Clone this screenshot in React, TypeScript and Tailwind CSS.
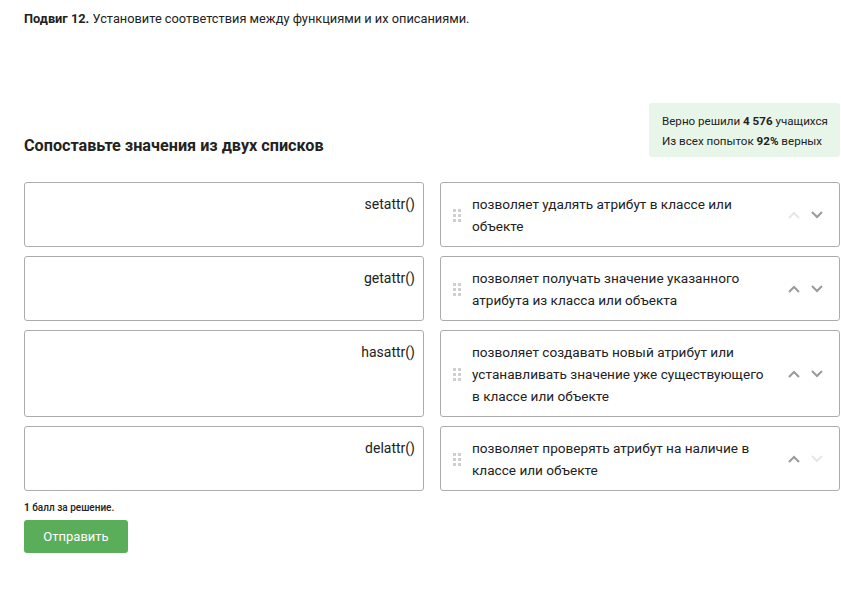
import React from "react";

const pairs = [
  { left: "setattr()", right: "позволяет удалять атрибут в классе или объекте", up: false, down: true },
  { left: "getattr()", right: "позволяет получать значение указанного атрибута из класса или объекта", up: true, down: true },
  { left: "hasattr()", right: "позволяет создавать новый атрибут или устанавливать значение уже существующего в классе или объекте", up: true, down: true },
  { left: "delattr()", right: "позволяет проверять атрибут на наличие в классе или объекте", up: true, down: false },
];

function Grip() {
  return (
    <div className="grid grid-cols-2 gap-[2px] shrink-0">
      {[0, 1, 2, 3, 4, 5].map((i) => (
        <span key={i} className="w-[3px] h-[3px] bg-[#cfcfcf]" />
      ))}
    </div>
  );
}

function Chevron({ dir, active }: { dir: "up" | "down"; active: boolean }) {
  return (
    <svg width="12" height="8" viewBox="0 0 12 8" className="shrink-0">
      <path
        d={dir === "up" ? "M1 7 L6 2 L11 7" : "M1 1 L6 6 L11 1"}
        fill="none"
        stroke={active ? "#9a9a9a" : "#e6e6e6"}
        strokeWidth="2"
      />
    </svg>
  );
}

export default function App() {
  return (
    <div className="w-[841px] h-[589px] bg-white pl-6 pr-px pt-[9px] text-[#222] font-['Roboto',sans-serif]">
      <p className="text-[12.8px] leading-5">
        <b className="font-bold">Подвиг 12.</b> Установите соответствия между функциями и их описаниями.
      </p>

      <div className="mt-[74px] flex justify-between items-end">
        <h2 className="text-[16.2px] leading-6 font-bold mb-[-1px]">Сопоставьте значения из двух списков</h2>
        <div className="w-[191px] h-[54px] rounded-[3px] bg-[#e8f6e9] pl-[13px] pt-[8px] text-[11.6px] leading-5 whitespace-nowrap">
          <div>
            Верно решили <b className="font-bold">4 576</b> учащихся
          </div>
          <div>
            Из всех попыток <b className="font-bold">92%</b> верных
          </div>
        </div>
      </div>

      <div className="mt-[25px] grid grid-cols-[400px_400px] gap-x-[16px] gap-y-[9px]">
        {pairs.map((p) => (
          <React.Fragment key={p.left}>
            <div className="border border-[#acacac] rounded-[3px] pt-[10px] pb-[9px] pr-[8px] text-right text-[14px] leading-[22px]">
              {p.left}
            </div>
            <div className="border border-[#acacac] rounded-[3px] pt-[10px] pb-[9px] pl-[12px] pr-[16px] flex items-center text-[13.6px] leading-[22px]">
              <Grip />
              <div className="ml-[11px] w-[300px]">{p.right}</div>
              <div className="ml-auto flex items-center gap-[11px]">
                <Chevron dir="up" active={p.up} />
                <Chevron dir="down" active={p.down} />
              </div>
            </div>
          </React.Fragment>
        ))}
      </div>

      <p className="mt-[11px] text-[10px] leading-[12px] font-medium">
        <b className="font-bold">1</b> балл за решение.
      </p>
      <button className="mt-[6px] w-[104px] h-[33px] rounded-[3px] bg-[#5aae5a] text-white text-[13px]">
        Отправить
      </button>
    </div>
  );
}
